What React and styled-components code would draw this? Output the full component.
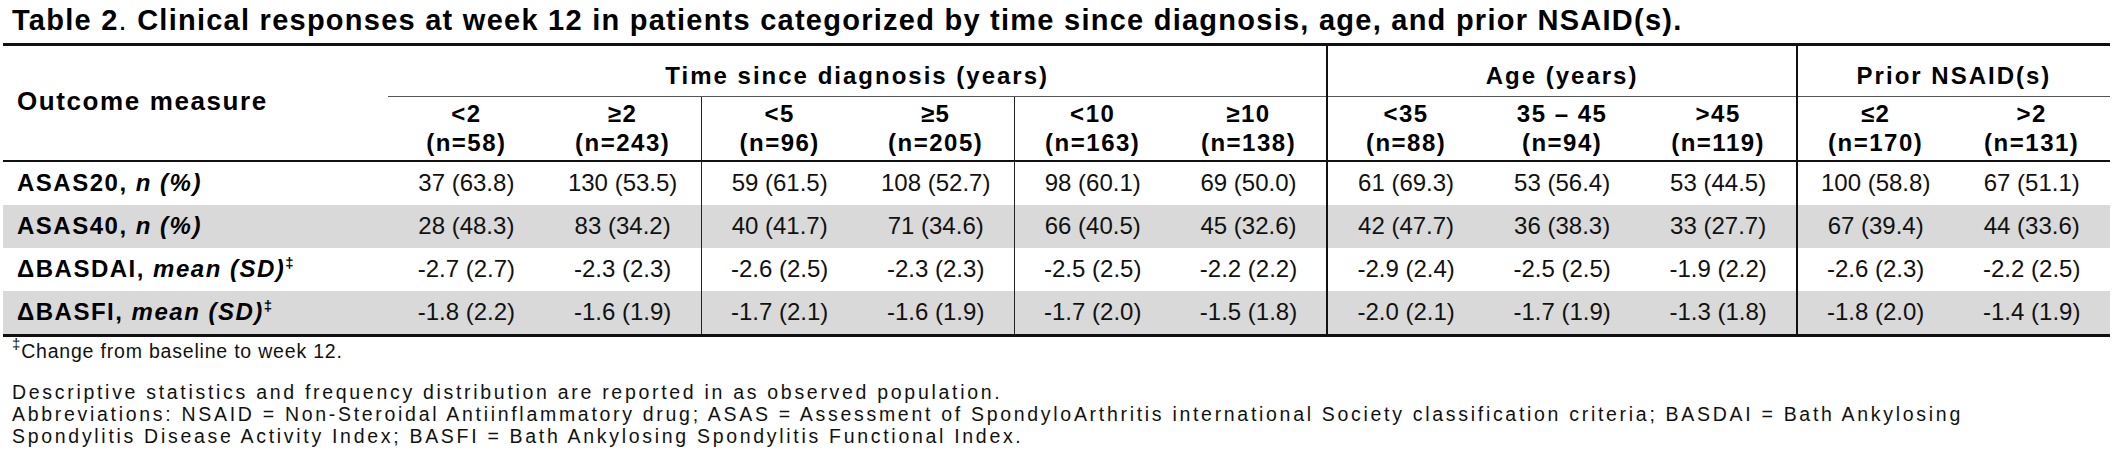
import React from 'react';
import styled, { createGlobalStyle } from 'styled-components';

const GlobalStyle = createGlobalStyle`
  html, body {
    margin: 0;
    padding: 0;
    background: #fff;
  }
  body {
    font-family: "Liberation Sans", Arial, sans-serif;
    color: #000;
  }
`;

const Page = styled.div`
  width: 2114px;
  height: 467px;
  padding-left: 3px;
  box-sizing: border-box;
  overflow: hidden;
`;

const Title = styled.h1`
  margin: 0;
  height: 43px;
  padding: 4px 0 0 9px;
  box-sizing: border-box;
  font-size: 29px;
  line-height: 33px;
  font-weight: bold;
  letter-spacing: 1.25px;
  white-space: nowrap;
`;

const Plain = styled.span`
  font-weight: normal;
`;

const Table = styled.table`
  width: 2107px;
  border-collapse: collapse;
  table-layout: fixed;
  border-top: 3px solid #111;
  border-bottom: 3px solid #111;
`;

const OutcomeCol = styled.col`
  width: 385px;
`;

const DataCol = styled.col`
  width: 156.5px;
`;

const OutcomeHead = styled.th`
  text-align: left;
  padding: 0 0 2px 14px;
  font-size: 26px;
  letter-spacing: 1.6px;
  font-weight: bold;
  vertical-align: middle;
  border-bottom: 2px solid #111;
`;

const GroupHead = styled.th`
  height: 52px;
  padding: 0 0 6px;
  box-sizing: border-box;
  vertical-align: bottom;
  font-size: 24px;
  line-height: 28px;
  letter-spacing: 2px;
  font-weight: bold;
  text-align: center;
  border-bottom: 1px solid #555;
  border-left: ${p => (p.$divider ? '2px solid #111' : 'none')};
`;

const SubHead = styled.th`
  height: 64px;
  padding: 0 0 3px;
  box-sizing: border-box;
  vertical-align: bottom;
  font-size: 24px;
  line-height: 29px;
  letter-spacing: 1.5px;
  font-weight: bold;
  text-align: center;
  border-bottom: 2px solid #111;
  border-left: ${p =>
    p.$line === 'thick' ? '2px solid #111' : p.$line === 'thin' ? '1.5px solid #222' : 'none'};
`;

const Row = styled.tr`
  background: ${p => (p.$shaded ? '#d9d9d9' : '#fff')};
`;

const Label = styled.td`
  height: 43px;
  padding: 0 0 0 14px;
  font-size: 24px;
  font-weight: bold;
  letter-spacing: 1.5px;
  white-space: nowrap;
  vertical-align: middle;
`;

const Cell = styled.td`
  padding: 0;
  font-size: 24px;
  color: #111;
  text-align: center;
  vertical-align: middle;
  white-space: nowrap;
  border-left: ${p =>
    p.$line === 'thick' ? '2px solid #111' : p.$line === 'thin' ? '1.5px solid #222' : 'none'};
`;

const Dagger = styled.sup`
  font-size: 15px;
  line-height: 0;
  vertical-align: 9px;
`;

const Notes = styled.div`
  padding: 3px 0 0 9px;
  color: #111;
  font-size: 19.5px;
  line-height: 22px;
  white-space: nowrap;
`;

const Note = styled.p`
  margin: 0 0 ${p => (p.$gap ? '19px' : '0')};
  letter-spacing: ${p => (p.$gap ? '0.8px' : '2.7px')};
`;

const groups = [
  { label: 'Time since diagnosis (years)', span: 6 },
  { label: 'Age (years)', span: 3, divider: true },
  { label: 'Prior NSAID(s)', span: 2, divider: true },
];

// line to the left of each data column
const lines = [null, null, 'thin', null, 'thin', null, 'thick', null, null, 'thick', null];

const subHeads = [
  ['<2', 'n=58'],
  ['≥2', 'n=243'],
  ['<5', 'n=96'],
  ['≥5', 'n=205'],
  ['<10', 'n=163'],
  ['≥10', 'n=138'],
  ['<35', 'n=88'],
  ['35 – 45', 'n=94'],
  ['>45', 'n=119'],
  ['≤2', 'n=170'],
  ['>2', 'n=131'],
];

const rows = [
  {
    name: 'ASAS20',
    stat: 'n (%)',
    values: ['37 (63.8)', '130 (53.5)', '59 (61.5)', '108 (52.7)', '98 (60.1)', '69 (50.0)', '61 (69.3)', '53 (56.4)', '53 (44.5)', '100 (58.8)', '67 (51.1)'],
  },
  {
    name: 'ASAS40',
    stat: 'n (%)',
    shaded: true,
    values: ['28 (48.3)', '83 (34.2)', '40 (41.7)', '71 (34.6)', '66 (40.5)', '45 (32.6)', '42 (47.7)', '36 (38.3)', '33 (27.7)', '67 (39.4)', '44 (33.6)'],
  },
  {
    name: 'ΔBASDAI',
    stat: 'mean (SD)',
    dagger: true,
    values: ['-2.7 (2.7)', '-2.3 (2.3)', '-2.6 (2.5)', '-2.3 (2.3)', '-2.5 (2.5)', '-2.2 (2.2)', '-2.9 (2.4)', '-2.5 (2.5)', '-1.9 (2.2)', '-2.6 (2.3)', '-2.2 (2.5)'],
  },
  {
    name: 'ΔBASFI',
    stat: 'mean (SD)',
    dagger: true,
    shaded: true,
    values: ['-1.8 (2.2)', '-1.6 (1.9)', '-1.7 (2.1)', '-1.6 (1.9)', '-1.7 (2.0)', '-1.5 (1.8)', '-2.0 (2.1)', '-1.7 (1.9)', '-1.3 (1.8)', '-1.8 (2.0)', '-1.4 (1.9)'],
  },
];

export default function App() {
  return (
    <Page>
      <GlobalStyle />
      <Title>
        Table 2<Plain>.</Plain> Clinical responses at week 12 in patients categorized by time since diagnosis, age, and prior NSAID(s).
      </Title>
      <Table>
        <colgroup>
          <OutcomeCol />
          {subHeads.map((_, i) => (
            <DataCol key={i} />
          ))}
        </colgroup>
        <thead>
          <tr>
            <OutcomeHead rowSpan={2}>Outcome measure</OutcomeHead>
            {groups.map(g => (
              <GroupHead key={g.label} colSpan={g.span} $divider={g.divider}>
                {g.label}
              </GroupHead>
            ))}
          </tr>
          <tr>
            {subHeads.map(([range, n], i) => (
              <SubHead key={i} $line={lines[i]}>
                {range}
                <br />({n})
              </SubHead>
            ))}
          </tr>
        </thead>
        <tbody>
          {rows.map(r => (
            <Row key={r.name} $shaded={r.shaded}>
              <Label>
                {r.name}, <i>{r.stat}</i>
                {r.dagger && <Dagger>‡</Dagger>}
              </Label>
              {r.values.map((v, i) => (
                <Cell key={i} $line={lines[i]}>
                  {v}
                </Cell>
              ))}
            </Row>
          ))}
        </tbody>
      </Table>
      <Notes>
        <Note $gap>
          <Dagger>‡</Dagger>Change from baseline to week 12.
        </Note>
        <Note>Descriptive statistics and frequency distribution are reported in as observed population.</Note>
        <Note>
          Abbreviations: NSAID = Non-Steroidal Antiinflammatory drug; ASAS = Assessment of SpondyloArthritis international Society classification criteria; BASDAI = Bath Ankylosing
        </Note>
        <Note>Spondylitis Disease Activity Index; BASFI = Bath Ankylosing Spondylitis Functional Index.</Note>
      </Notes>
    </Page>
  );
}
